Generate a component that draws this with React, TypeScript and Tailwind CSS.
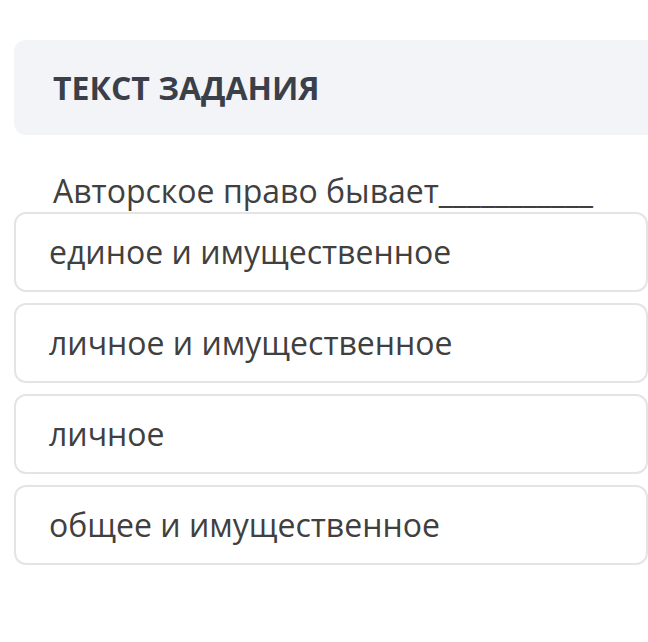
const OPTIONS = ['единое и имущественное', 'личное и имущественное', 'личное', 'общее и имущественное']

export default function App() {
  return (
    <div className="min-h-[642px] bg-white pt-10 pl-[14px] font-['Open_Sans',sans-serif]">
      <div className="flex h-[95px] items-center rounded-l-xl bg-[#f3f4f7] pl-[39px]">
        <h1 className="text-[32px] font-bold text-[#3a3f49]">ТЕКСТ ЗАДАНИЯ</h1>
      </div>
      <p className="mt-[35px] pl-[39px] text-[32px] leading-[42px] text-[#404040]">
        Авторское право бывает___________
      </p>
      <ul className="flex flex-col gap-[11px]">
        {OPTIONS.map((option) => (
          <li
            key={option}
            className="flex h-[80px] items-center rounded-xl border-2 border-[#e4e4e4] pl-[33px] text-[32px] text-[#404040]"
          >
            {option}
          </li>
        ))}
      </ul>
    </div>
  )
}
